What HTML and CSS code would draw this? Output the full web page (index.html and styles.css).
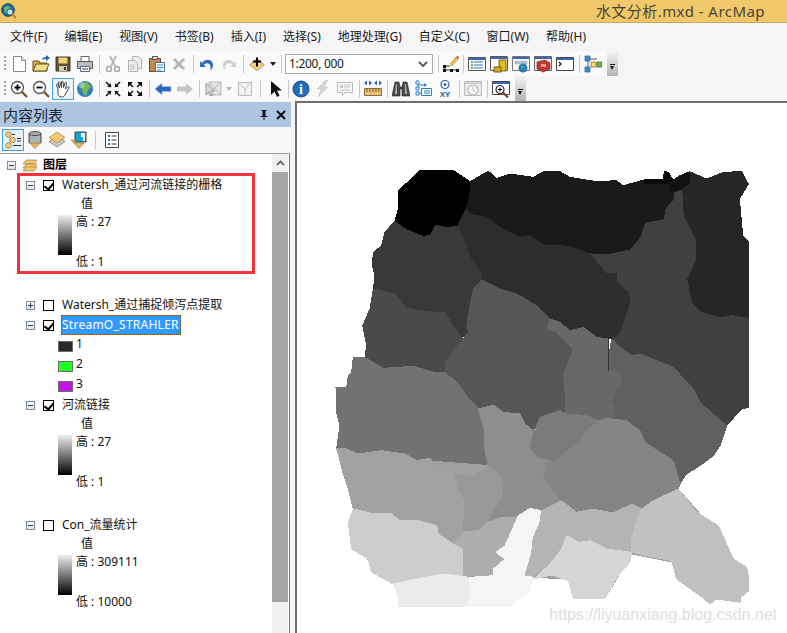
FILE: index.html
```html
<!DOCTYPE html>
<html lang="zh">
<head>
<meta charset="utf-8">
<title>水文分析.mxd - ArcMap</title>
<link rel="stylesheet" href="styles.css">
</head>
<body>
<div class="app">
  <header class="titlebar">
    <svg class="appicon" viewBox="0 0 16 16" width="16" height="16"><circle cx="7" cy="7" r="6.3" fill="#1d6f9e" stroke="#0d3f63"/><path d="M3 5l3-2 3 1 1 3-3 1-1 3-2-2z" fill="#6fbf6a"/><circle cx="9" cy="9" r="3.2" fill="#bfe6f2" stroke="#184b66"/><path d="M11 11l4 4" stroke="#c9802a" stroke-width="2"/></svg>
    <div class="title">水文分析.mxd - ArcMap</div>
  </header>

  <nav class="menubar">
    <span>文件(F)</span><span>编辑(E)</span><span>视图(V)</span><span>书签(B)</span><span>插入(I)</span><span>选择(S)</span><span>地理处理(G)</span><span>自定义(C)</span><span>窗口(W)</span><span>帮助(H)</span>
  </nav>

  <div class="toolrow">
    <div class="toolbar bar-a">
      <i class="grip"></i>
      <b class="btn"><svg viewBox="0 0 18 18"><path d="M3.5 1.5h8l4 4v11h-12z" fill="#fff" stroke="#7d8794"/><path d="M11.5 1.5v4h4" fill="#e8ecf0" stroke="#7d8794"/></svg></b>
      <b class="btn"><svg viewBox="0 0 18 18"><path d="M1 6h6l1 2h7v8H1z" fill="#d9b04a" stroke="#6a5216"/><path d="M1 16l3-7h13l-3 7z" fill="#f5dc8c" stroke="#6a5216"/><path d="M10 5c0-2 2-3 4-3V0l4 3-4 3V4c-2 0-3 0-4 1z" fill="#2a66b4"/></svg></b>
      <b class="btn"><svg viewBox="0 0 18 18"><path d="M2 2h14v14H2z" fill="#5f5330" stroke="#3f3820"/><path d="M4.500 2.500h9v6h-9z" fill="#f0cf76"/><path d="M5 11h8v5H5z" fill="#cfc8b0"/><path d="M10 12h2v3h-2z" fill="#3f3820"/></svg></b>
      <b class="btn"><svg viewBox="0 0 18 18"><path d="M5 1.500h8v5H5z" fill="#fff" stroke="#666"/><path d="M1.500 6.500h15v7h-15z" fill="#b9bcc0" stroke="#55585c"/><path d="M4.500 11.500h9v5h-9z" fill="#fff" stroke="#666"/><path d="M6 14h6" stroke="#3a80c8" stroke-width="1.500"/></svg></b>
      <i class="sep"></i>
      <b class="btn"><svg viewBox="0 0 18 18"><path d="M6 1l5 10M12 1L7 11" stroke="#b4b7ba" stroke-width="1.800" fill="none"/><circle cx="5" cy="14" r="2.500" fill="none" stroke="#a8abae" stroke-width="1.500"/><circle cx="13" cy="14" r="2.500" fill="none" stroke="#a8abae" stroke-width="1.500"/></svg></b>
      <b class="btn"><svg viewBox="0 0 18 18"><path d="M6.500 1.500h6l3 3v9h-9z" fill="#eee" stroke="#b0b2b4"/><path d="M2.500 5.500h6l3 3v8h-9z" fill="#f0f0f0" stroke="#adafb1"/><path d="M4 10h5M4 12h5M4 14h5" stroke="#bbb"/></svg></b>
      <b class="btn"><svg viewBox="0 0 18 18"><path d="M1.500 3.500h11v13h-11z" fill="#c38a4d" stroke="#6e4522"/><path d="M4.500 1.500h5v3h-5z" fill="#ddd" stroke="#555"/><path d="M7.500 7.500h9v9h-9z" fill="#fff" stroke="#4a6d96"/><path d="M9 10h6M9 12.500h6M9 15h4" stroke="#2d80c6"/></svg></b>
      <b class="btn"><svg viewBox="0 0 18 18"><path d="M4 4l10 10M14 4L4 14" stroke="#b5b7b9" stroke-width="3"/></svg></b>
      <i class="sep"></i>
      <b class="btn"><svg viewBox="0 0 18 18"><path d="M4 8c3-5 10-4 11 1 .5 3-1 5-3 6 1-3 1-5-1-6-2-1.500-4-.5-5 1l2 2H2V6z" fill="#2f6db5"/></svg></b>
      <b class="btn"><svg viewBox="0 0 18 18"><path d="M14 8C11 3 4 4 3 9c-.5 3 1 5 3 6-1-3-1-5 1-6 2-1.500 4-.5 5 1l-2 2h6V6z" fill="#cfd1d3"/></svg></b>
      <i class="sep"></i>
      <b class="btn"><svg viewBox="0 0 22 18"><path d="M11 3l9 7-9 7-9-7z" fill="#f3cf85" stroke="#a88347"/><path d="M11 1v11M6 6h10" stroke="#000" stroke-width="2.500"/></svg></b>
      <b class="drop"></b>
      <i class="sep"></i>
      <div class="combo"><span>1:200, 000</span><svg viewBox="0 0 10 6" width="10" height="6"><path d="M1 1l4 4 4-4" fill="none" stroke="#555" stroke-width="1.800"/></svg></div>
      <i class="sep sep-m"></i>
      <b class="btn btn-19"><svg viewBox="0 0 18 18"><path d="M8 9l6-7 2 2-6 7z" fill="#f2c25a" stroke="#a97b2a" stroke-width=".6"/><path d="M14 2l2 2 1-1.500L15.500 1z" fill="#d33"/><path d="M2 15h14M3 11v4M3 11l5 0" stroke="#222"/><path d="M1 10h3v3H1zM1 14h3v3H1zM8 14h3v3H8zM14 14h3v3h-3z" fill="#111"/></svg></b>
      <i class="sep"></i>
      <b class="btn"><svg viewBox="0 0 18 18"><path d="M.5 2.500h17v13H.5z" fill="#fff" stroke="#555"/><path d="M1 3h16v2H1z" fill="#3968b8"/><path d="M3 7h2M3 10h2M3 13h2" stroke="#2f9b45" stroke-width="1.500"/><path d="M6 7h9M6 10h9M6 13h9" stroke="#2d6cc0" stroke-width="1.200"/></svg></b>
      <b class="btn"><svg viewBox="0 0 18 18"><path d="M.5 1.500h17v14H.5z" fill="#fff" stroke="#555"/><path d="M1 2h16v2H1z" fill="#3968b8"/><path d="M9 5h7v11H9z" fill="#e8bd20" stroke="#7d6510"/><path d="M4 12h7v5H4z" fill="#d9b01d" stroke="#6d5c10"/></svg></b>
      <b class="btn"><svg viewBox="0 0 18 18"><path d="M.5 1.500h17v14H.5z" fill="#fff" stroke="#777"/><path d="M1 2h16v2H1z" fill="#3968b8"/><path d="M3 6h12v3H3z" fill="#b8c6d8" stroke="#8fa0b4" stroke-width=".5"/><circle cx="11" cy="13" r="4.500" fill="#2c79c2"/><path d="M9 10l3 1-1 3-2-1z" fill="#54b04a"/></svg></b>
      <b class="btn"><svg viewBox="0 0 18 18"><path d="M.5 1.500h17v14H.5z" fill="#eee" stroke="#666"/><path d="M1 2h16v2H1z" fill="#3968b8"/><path d="M3 7l8-2 5 3v6l-7 3-6-3z" fill="#bf3a35" stroke="#7b1e1a" stroke-width=".6"/><path d="M7 9h5v3H7z" fill="#e89a94"/></svg></b>
      <b class="btn"><svg viewBox="0 0 18 18"><path d="M.5 2.500h17v13H.5z" fill="#fff" stroke="#444"/><path d="M1 3h16v2H1z" fill="#3968b8"/><path d="M3 7l2 2-2 2" fill="none" stroke="#111" stroke-width="1.200"/></svg></b>
      <i class="sep"></i>
      <b class="btn"><svg viewBox="0 0 18 18"><path d="M4 4h9M4 4v10h2M13 10h0" stroke="#555" fill="none"/><path d="M1 1h5v5H1zM1 12h5v5H1z" fill="#3a8fd8" stroke="#1f5f9c" stroke-width=".7"/><path d="M7 7h5v5H7z" fill="#f0d98a" stroke="#8a6f20" stroke-width=".8"/><path d="M13 7h5v5h-5z" fill="#6cb84b" stroke="#356f20" stroke-width=".8"/></svg></b>
    </div>
    <div class="handle"></div>
  </div>

  <div class="toolrow">
    <div class="toolbar bar-b">
      <i class="grip"></i>
      <b class="btn"><svg viewBox="0 0 18 18"><circle cx="7.500" cy="7.500" r="6" fill="#fff" stroke="#555" stroke-width="1.300"/><path d="M4.500 7.500h6M7.500 4.500v6" stroke="#000" stroke-width="1.800"/><path d="M12 12l5 5" stroke="#7a4a2a" stroke-width="2.300"/></svg></b>
      <b class="btn"><svg viewBox="0 0 18 18"><circle cx="7.500" cy="7.500" r="6" fill="#fff" stroke="#555" stroke-width="1.300"/><path d="M4.500 7.500h6" stroke="#000" stroke-width="1.800"/><path d="M12 12l5 5" stroke="#7a4a2a" stroke-width="2.300"/></svg></b>
      <b class="btn btn-on"><svg viewBox="0 0 18 18"><path d="M4 9L2.500 5c-.4-1 1-1.500 1.500-.5L5.500 8 4.500 3c-.2-1.200 1.300-1.400 1.600-.3L7.500 7.500 7.500 2c0-1.200 1.500-1.200 1.600 0L9.500 7.500 11 3c.3-1 1.700-.7 1.500.4L11.500 9l2-2c.8-.8 2 .2 1.300 1.100L11.500 14c-1 2-2 3-4 3-2.500 0-3.500-2-3.500-4z" fill="#fff" stroke="#333" stroke-width=".9"/></svg></b>
      <b class="btn"><svg viewBox="0 0 18 18"><circle cx="9" cy="9" r="8" fill="#2f7fc4"/><path d="M5 3l6-1 4 5-3 3-2 6-3-2-1-5-3-2z" fill="#7cb84a"/><circle cx="6" cy="5" r="3" fill="#b6d9f0" opacity=".5"/></svg></b>
      <i class="sep"></i>
      <b class="btn"><svg viewBox="0 0 18 18"><path d="M2 2l5 5M16 2l-5 5M2 16l5-5M16 16l-5-5" stroke="#111" stroke-width="1.500"/><path d="M3 7h4V3zM15 7h-4V3zM3 11h4v4zM15 11h-4v4z" fill="#111"/></svg></b>
      <b class="btn"><svg viewBox="0 0 18 18"><path d="M4 4l3 3M14 4l-3 3M4 14l3-3M14 14l-3-3" stroke="#111" stroke-width="1.500"/><path d="M2 2h5L2 7zM16 2h-5l5 5zM2 16h5l-5-5zM16 16h-5l5-5z" fill="#111"/></svg></b>
      <i class="sep"></i>
      <b class="btn"><svg viewBox="0 0 18 18"><path d="M1 9l7-6v3.500h9v5H8V15z" fill="#2a64c0" stroke="#a4c0e6" stroke-width=".7"/></svg></b>
      <b class="btn"><svg viewBox="0 0 18 18"><path d="M17 9l-7-6v3.500H1v5h9V15z" fill="#c2c4c6"/></svg></b>
      <i class="sep"></i>
      <b class="btn"><svg viewBox="0 0 18 18"><path d="M5 2h12v13H5z" fill="#e6e6e6" stroke="#b6b6b6"/><path d="M5 2l12 13M17 2L10 9" stroke="#bbb"/><path d="M2 3v12l3-3 2 4 2-1-2-4h4z" fill="#d8d8d8" stroke="#9a9a9a"/></svg></b>
      <b class="drop drop-off"></b>
      <b class="btn"><svg viewBox="0 0 18 18"><path d="M2.500 2.500h13v13h-13z" fill="#f2f2f2" stroke="#bbb"/><path d="M3 3l6 6 6-6M9 9v6" stroke="#c4c4c4" fill="none"/></svg></b>
      <i class="sep sep-8"></i>
      <b class="btn"><svg viewBox="0 0 18 18"><path d="M5 1v14l3.500-3.500L11 17l2.500-1.500L11 10.500h5z" fill="#111"/></svg></b>
      <i class="sep sep-4"></i>
      <b class="btn"><svg viewBox="0 0 18 18"><circle cx="9" cy="9" r="8" fill="#1f6dc2" stroke="#154f90"/><text x="9" y="14" class="info">i</text></svg></b>
      <b class="btn"><svg viewBox="0 0 18 18"><path d="M12 0L3 9h4l-3 8 10-10h-4l4-7z" fill="#d4d6d8" stroke="#bcbec0" stroke-width=".5"/></svg></b>
      <b class="btn"><svg viewBox="0 0 18 18"><path d="M1.500 2.500h15v10h-7l-3 3v-3h-5z" fill="#f7f7f7" stroke="#bbb"/><path d="M4 5h3v3H4z" fill="#ccc"/><path d="M8 5h6M8 7h6M4 10h10" stroke="#c4c4c4"/></svg></b>
      <i class="sep"></i>
      <b class="btn"><svg viewBox="0 0 18 18"><path d="M0 3l3-2.500v5zM8 3L5 .5v5zM10 3l3-2.500v5zM18 3l-3-2.500v5z" fill="#2a66b4"/><path d="M.5 8.500h17v7H.5z" fill="#e9c47a" stroke="#8a6a30"/><path d="M3 9v3M6 9v3M9 9v3M12 9v3M15 9v3" stroke="#6c5020"/></svg></b>
      <i class="sep"></i>
      <b class="btn"><svg viewBox="0 0 18 18"><path d="M3 2h4l1 5h2l1-5h4l3 14H10V9H8v7H0z" fill="#4a4a4a" stroke="#222" stroke-width=".6"/><path d="M4 4h1v10H3zM13 4h1l1 10h-2z" fill="#b0b0b0"/></svg></b>
      <b class="btn"><svg viewBox="0 0 18 18"><path d="M4 3v6M4 5h6M7 13h-3" stroke="#2a7fc8" fill="none"/><path d="M2 1h3v3H2zM2 7h3v3H2zM2 12h3v3H2z" fill="#fff" stroke="#2a7fc8"/><path d="M10 3l3 2-3 2z" fill="#2a7fc8"/><path d="M7.500 8.500h10v7h-10z" fill="#fff" stroke="#2a7fc8"/><path d="M10 11h6M10 13h6" stroke="#2a7fc8"/></svg></b>
      <b class="btn"><svg viewBox="0 0 18 18"><circle cx="9" cy="4.500" r="4" fill="#fff" stroke="#2a66b4" stroke-width="1.200"/><circle cx="9" cy="4.500" r="1.500" fill="#2a66b4"/><text x="9" y="16.500" class="xy">XY</text></svg></b>
      <i class="sep"></i>
      <b class="btn"><svg viewBox="0 0 18 18"><path d="M.5 1.500h17v14H.5z" fill="#eaeaea" stroke="#bbb"/><path d="M1 2h16v2H1z" fill="#cfcfcf"/><circle cx="9" cy="10" r="5" fill="#f5f5f5" stroke="#bbb" stroke-width="1.200"/><path d="M9 7v3l2 1.500" stroke="#bbb" fill="none"/></svg></b>
      <i class="sep"></i>
      <b class="btn"><svg viewBox="0 0 18 18"><path d="M.5 1.500h17v13H.5z" fill="#fff" stroke="#444"/><path d="M1 2h16v2H1z" fill="#3968b8"/><circle cx="8" cy="9.500" r="4" fill="#fff" stroke="#222" stroke-width="1.200"/><path d="M6 9.500h4M8 7.500v4" stroke="#000"/><path d="M11 12.500l5 5" stroke="#7a3f28" stroke-width="2"/></svg></b>
    </div>
    <div class="handle"></div>
  </div>

  <main class="workspace">
    <aside class="toc">
      <div class="toc-title">
        <h2>内容列表</h2>
        <svg viewBox="0 0 10 12" width="10" height="12"><path d="M2.500 1h5v1h-1v5h2v1H5.500v3h-1V8H1.500V7h2V2h-1z" fill="#111"/></svg>
        <svg viewBox="0 0 10 10" width="10" height="10"><path d="M1 1l8 8M9 1L1 9" stroke="#111" stroke-width="2"/></svg>
      </div>
      <div class="toc-tools">
        <b class="tbtn tbtn-on"><svg viewBox="0 0 18 18"><circle cx="4.500" cy="3.500" r="2.800" fill="#f0cf86" stroke="#a98a46"/><circle cx="8.500" cy="9" r="2.800" fill="#f0cf86" stroke="#a98a46"/><circle cx="4.500" cy="14.500" r="2.800" fill="#f0cf86" stroke="#a98a46"/><path d="M13 7.500h4M13 10h4M8 3.500h3M9 14.500h8" stroke="#333"/></svg></b>
        <b class="tbtn"><svg viewBox="0 0 18 18"><path d="M3 2.500c0-2.500 12-2.500 12 0v9c0 2-12 2-12 0z" fill="#aab1b8" stroke="#444"/><path d="M3 3c2 2 10 2 12 0" fill="none" stroke="#444"/><path d="M4 12h10l-5 5.500z" fill="#e6b65a" stroke="#a5803a" stroke-width=".7"/></svg></b>
        <b class="tbtn"><svg viewBox="0 0 18 18"><path d="M9 5l8 5.500-8 5.500-8-5.500z" fill="#c9c9c9" stroke="#777" stroke-width=".7"/><path d="M9 1l8 5.500-8 5.500-8-5.500z" fill="#f2c877" stroke="#a5803a" stroke-width=".7"/></svg></b>
        <b class="tbtn"><svg viewBox="0 0 18 18"><path d="M5 1h11v10H5z" fill="#14a3d8" stroke="#444"/><path d="M11 2h4v8h-2V6h-2z" fill="#fff"/><path d="M1 9h4v3h9l-5 5.500z" fill="#e6b65a" stroke="#a5803a" stroke-width=".7"/></svg></b>
        <i class="tsep"></i>
        <b class="tbtn"><svg viewBox="0 0 18 18"><path d="M2.500 1.500h13v15h-13z" fill="#fff" stroke="#445"/><path d="M5 5h2M5 9h2M5 13h2" stroke="#2b6bb0" stroke-width="1.800"/><path d="M8.500 5h5M8.500 9h5M8.500 13h5" stroke="#333"/></svg></b>
      </div>
      <div class="tree-frame">
        <div class="tree">
          <div class="row root">
            <i class="exp minus"></i>
            <svg class="stack" viewBox="0 0 16 13" width="16" height="13"><path d="M4 1h11l-3 4H1z" fill="#f2c877" stroke="#a5803a" stroke-width=".7"/><path d="M4 5h11l-3 4H1z" fill="#f2c877" stroke="#a5803a" stroke-width=".7"/><path d="M4 8h11l-3 4H1z" fill="#f2c877" stroke="#a5803a" stroke-width=".7"/></svg>
            <span class="root-label">图层</span>
          </div>

          <div class="row layer"><i class="exp minus"></i><i class="chk on"></i><span class="name">Watersh_通过河流链接的栅格</span></div>
          <div class="val">值</div>
          <div class="ramp"><i class="grad"></i><span>高 : 27</span><span>低 : 1</span></div>

          <div class="row layer"><i class="exp plus"></i><i class="chk"></i><span class="name">Watersh_通过捕捉倾泻点提取</span></div>
          <div class="row layer"><i class="exp minus"></i><i class="chk on"></i><span class="name selected">StreamO_STRAHLER</span></div>
          <div class="row cls"><i class="sw sw1"></i><span>1</span></div>
          <div class="row cls"><i class="sw sw2"></i><span>2</span></div>
          <div class="row cls"><i class="sw sw3"></i><span>3</span></div>

          <div class="row layer"><i class="exp minus"></i><i class="chk on"></i><span class="name">河流链接</span></div>
          <div class="val">值</div>
          <div class="ramp"><i class="grad"></i><span>高 : 27</span><span>低 : 1</span></div>

          <div class="row layer"><i class="exp minus"></i><i class="chk"></i><span class="name">Con_流量统计</span></div>
          <div class="val">值</div>
          <div class="ramp"><i class="grad"></i><span>高 : 309111</span><span>低 : 10000</span></div>

          <div class="annotation"></div>
        </div>
        <div class="scrollbar">
          <div class="sb-up"><svg viewBox="0 0 9 6" width="9" height="6"><path d="M1 5l3.500-3.500L8 5" fill="none" stroke="#555" stroke-width="1.600"/></svg></div>
          <div class="sb-thumb"></div>
        </div>
      </div>
    </aside>

    <section class="map">
      <svg class="mapsvg" viewBox="297 104 490 529" width="490" height="529">
        <g transform="translate(330 160) scale(.33333)">
          <polygon class="c-c" points="1078,38 1130,60 1180,40 1235,38 1255,75 1228,120 1238,230 1257,250 1257,478 1205,470 1170,476 1115,460 1085,430 1070,360 1098,300 1095,240 1060,170 1055,90 1080,70"/>
          <polygon class="c-d" points="1045,92 1055,90 1060,170 1095,240 1098,300 1070,360 1085,430 1115,460 1170,476 1205,470 1257,478 1257,745 1235,750 1190,800 1110,730 1090,690 1030,625 930,585 905,590 865,560 845,540 870,520 900,430 895,400 860,370 860,345 830,345 780,285 830,285 900,270 930,235 945,190 1000,180 1005,150 1030,120 1030,100"/>
          <polygon class="c-b" points="420,68 475,36 500,58 540,45 610,55 640,38 690,38 720,55 800,68 860,65 880,80 945,62 1000,62 1003,36 1015,40 1030,65 1050,50 1078,38 1080,70 1055,90 1030,100 1030,120 1005,150 1000,180 945,190 930,235 900,270 830,285 760,280 720,262 640,258 600,230 570,235 510,205 470,175 420,165 405,150"/>
          <polygon class="c-x" points="945,62 1000,62 1003,36 1015,40 1030,65 1020,75 945,75"/>
          <polygon class="c-y" points="1020,70 1050,50 1078,38 1080,70 1055,90 1040,92 1020,100"/>
          <polygon class="c-e" points="405,150 420,165 470,175 510,205 570,235 600,230 640,258 720,262 780,285 830,345 860,345 860,370 895,400 900,430 870,520 845,540 800,535 760,505 720,515 690,490 660,480 620,440 560,405 510,390 455,362 440,320 420,295 400,240 380,200"/>
          <polygon class="c-f" points="195,185 232,210 280,230 300,225 315,195 345,202 380,200 400,240 420,295 450,340 455,362 430,390 420,440 410,500 415,520 400,535 375,510 345,462 290,458 230,448 195,405 130,390 135,350 127,320 130,280 155,260 165,220"/>
          <polygon class="c-a" points="268,36 372,36 420,68 416,110 405,150 380,200 345,202 315,195 300,225 280,230 232,210 195,185 205,150 205,95"/>
          <polygon class="c-g" points="130,390 195,405 230,448 290,458 345,462 375,510 400,540 375,570 348,610 348,642 320,642 250,622 160,628 105,595 110,560 98,500 120,450"/>
          <polygon class="c-h" points="455,362 510,390 560,405 620,440 660,480 650,510 680,520 730,570 700,650 708,720 708,765 690,755 630,775 610,815 585,795 570,765 540,760 520,760 490,738 445,750 435,735 415,720 390,680 348,642 348,610 375,570 400,540 415,520 410,500 420,440 430,390"/>
          <polygon class="c-j" points="845,540 865,560 905,590 930,585 1030,625 1090,690 1110,730 1190,800 1170,860 1150,890 1110,920 1070,945 1050,975 1030,905 945,850 930,815 890,785 855,780 855,750 845,725 860,690 875,670 865,635 835,635 835,600"/>
          <polygon class="c-i" points="660,480 690,490 720,515 760,505 800,535 835,540 835,635 865,635 875,670 860,690 845,725 855,750 855,780 805,785 770,770 708,765 708,720 700,650 730,570 680,520 650,510"/>
          <polygon class="c-k" points="70,595 105,595 160,628 250,622 320,642 348,642 390,680 415,720 435,735 445,750 465,820 465,870 475,920 420,952 375,945 340,945 300,898 260,905 225,885 155,875 85,885 50,870 20,868 30,800 20,760 18,685 50,685 55,650 65,640"/>
          <rect class="c-line" x="834" y="540" width="4" height="95"/>
        </g>
        <g transform="translate(330 390) scale(.33333)">
          <polygon class="c-base" points="90,200 480,230 1040,280 1045,300 1150,420 1200,520 1240,600 1140,630 1030,520 905,495 830,620 730,620 715,570 610,565 600,605 420,645 210,645 195,580 130,540 90,470"/>
          <polygon class="c-l" points="445,60 490,48 520,70 570,75 585,105 610,125 600,175 625,205 675,215 640,225 650,240 640,265 695,335 635,365 565,380 515,385 470,400 500,350 515,320 520,280 500,245 475,235 465,180 465,130"/>
          <polygon class="c-m" points="630,85 690,65 708,75 770,80 805,95 765,130 750,160 700,195 675,215 625,205 600,175 612,130"/>
          <polygon class="c-n" points="805,95 830,88 890,95 930,125 945,160 1030,215 1050,285 1045,300 970,335 935,360 905,345 850,372 790,360 740,370 695,335 640,265 650,240 640,225 675,215 700,195 750,160 765,130"/>
          <polygon class="c-o" points="20,178 50,180 85,195 155,185 225,195 260,215 300,208 340,255 375,255 385,300 405,335 400,425 370,465 325,435 320,410 265,395 210,395 185,375 120,372 70,360 55,300 40,255"/>
          <polygon class="c-p" points="375,255 420,262 475,235 500,245 520,280 515,320 500,350 470,400 445,425 400,428 405,335 385,300"/>
          <polygon class="c-q" points="400,428 445,425 470,400 515,385 565,385 525,470 497,490 525,510 490,540 490,560 397,560 397,480 370,465"/>
          <polygon class="c-r" points="70,360 120,372 185,375 210,395 265,395 320,410 325,435 370,465 397,480 397,560 340,555 260,570 190,585 125,550 115,510 65,480 55,400"/>
          <polygon class="c-s" points="190,585 260,570 340,555 420,565 420,630 410,653 207,653 205,620"/>
          <polygon class="c-t" points="565,380 600,358 632,365 630,400 610,445 605,490 585,560 610,565 600,610 560,635 545,653 410,653 420,630 420,565 490,560 490,540 525,510 497,490 525,470"/>
          <polygon class="c-u" points="635,365 695,335 740,370 790,360 850,372 905,345 935,360 915,410 905,450 905,490 830,480 780,455 745,460 710,440 695,480 660,525 610,560 585,560 605,490 610,445 630,400"/>
          <polygon class="c-v" points="710,440 745,460 780,455 830,480 905,490 900,520 860,565 825,628 730,628 715,575 665,558 610,570 660,525 695,480"/>
          <polygon class="c-w" points="1045,300 1100,370 1165,410 1210,510 1250,535 1257,570 1257,605 1232,625 1230,640 1160,630 1140,645 1110,620 1040,570 1025,515 970,505 905,490 905,450 915,410 935,360 970,335"/>
        </g>
      </svg>
      <div class="watermark">https://liyuanxiang.blog.csdn.net</div>
    </section>
  </main>
</div>
</body>
</html>
```
FILE: styles.css
```css
* { box-sizing: border-box; margin: 0; padding: 0; }
html, body { height: 100%; overflow: hidden; }
body {
  font-family: "Noto Sans", "Noto Sans CJK SC", sans-serif;
  font-size: 12px;
  color: #1a1a1a;
  background: #f5f5f5;
}
.app { width: 787px; height: 633px; display: flex; flex-direction: column; overflow: hidden; }

/* title bar */
.titlebar {
  height: 23px;
  flex: none;
  display: flex;
  align-items: center;
  justify-content: space-between;
  padding: 0 22px 0 1px;
  background: #f0c869;
  border-bottom: 1px solid #c8a860;
}
.appicon { display: block; }
.title { font-size: 15px; line-height: 22px; color: #4b4335; letter-spacing: .45px; }

/* menu */
.menubar {
  height: 28px;
  flex: none;
  display: flex;
  align-items: center;
  gap: 17px;
  padding-left: 10px;
  background: #f5f5f5;
  line-height: 18px;
  white-space: nowrap;
}

/* tool bars */
.toolrow { height: 25px; flex: none; display: flex; align-items: stretch; }
.toolbar { display: flex; align-items: center; background: #fafafa; position: relative; padding-left: 8px; height: 25px; }
.bar-a { width: 607px; }
.bar-b { width: 515px; }
.grip {
  position: absolute; left: 4px; top: 5px; width: 2px; height: 15px;
  background-image: repeating-linear-gradient(#a0a0a0 0 2px, transparent 2px 4px);
}
.btn { width: 22px; height: 22px; flex: none; display: flex; align-items: center; justify-content: center; }
.btn svg { width: 18px; height: 18px; display: block; }
.btn-19 { width: 19px; }
.btn-on { background: #eaf5fd; border: 1px solid #3f9ff0; }
.drop { width: 10px; height: 22px; flex: none; position: relative; }
.drop::after {
  content: ""; position: absolute; left: 2px; top: 9px;
  border-left: 3.500px solid transparent; border-right: 3.500px solid transparent; border-top: 4px solid #222;
}
.drop-off::after { border-top-color: #b5b5b5; }
.sep { width: 6px; height: 18px; flex: none; position: relative; }
.sep::after { content: ""; position: absolute; left: 3px; top: 0; width: 1px; height: 18px; background: #c8c8c8; }
.sep-8 { width: 8px; }
.sep-8::after { left: 4px; }
.sep-4 { width: 4px; }
.sep-4::after { left: 2px; }
.sep-m { margin-left: 2px; }
.combo {
  width: 148px; height: 20px; margin-left: 1px; flex: none;
  display: flex; align-items: center; justify-content: space-between;
  padding: 0 4px 0 3px;
  background: #fff; border: 1px solid #ababab;
  font-size: 12px; letter-spacing: -.3px;
}
.handle {
  width: 11px;
  background: linear-gradient(#f4f4f4, #b4b4b4);
  position: relative;
}
.handle::before {
  content: ""; position: absolute; left: 3px; top: 13px; width: 5px; height: 1px; background: #111;
}
.handle::after {
  content: ""; position: absolute; left: 3px; top: 15px;
  border-left: 2.500px solid transparent; border-right: 2.500px solid transparent; border-top: 4px solid #111;
}
.info { font: bold 14px "Liberation Serif", serif; fill: #fff; text-anchor: middle; }
.xy { font: bold 8px "Liberation Sans", sans-serif; fill: #1f5aa8; text-anchor: middle; }

/* workspace */
.workspace { flex: 1; display: flex; min-height: 0; }
.toc { width: 295px; flex: none; display: flex; flex-direction: column; background: #f5f5f5; padding-top: 1px; }
.toc-title {
  width: 291px; height: 25px; flex: none;
  display: flex; align-items: center; gap: 7px;
  padding: 0 5px 0 3px;
  background: #aec6e2;
}
.toc-title h2 { flex: 1; font-size: 15px; font-weight: 400; color: #1b2636; line-height: 24px; }
.toc-tools { height: 26px; flex: none; display: flex; align-items: center; padding-left: 2px; background: #f9f9f9; width: 291px; }
.tbtn { width: 22px; height: 22px; flex: none; display: flex; align-items: center; justify-content: center; }
.tbtn svg { width: 18px; height: 18px; display: block; }
.tbtn-on { background: #e6f2fb; border: 1px solid #3f9ff0; }
.tsep { width: 1px; height: 18px; margin: 0 5px; background: #c8c8c8; flex: none; }

.tree-frame {
  width: 290px; flex: 1; min-height: 0; display: flex;
  background: #fff;
  border-top: 1px solid #9a9a9a;
  border-right: 1px solid #7e7e7e;
}
.tree { flex: 1; position: relative; padding-top: 1px; color: #111; white-space: nowrap; }
.row { height: 20px; display: flex; align-items: center; }
.root { padding-left: 7px; }
.stack { margin-left: 6px; }
.root-label { margin-left: 5px; font-weight: 700; line-height: 18px; color: #000; }
.layer { padding-left: 26px; }
.exp {
  width: 9px; height: 9px; flex: none; position: relative;
  border: 1px solid #7f8c99;
  background: linear-gradient(#fff, #dfe3e7);
}
.minus::before, .plus::before {
  content: ""; position: absolute; left: 1px; top: 3px; width: 5px; height: 1px; background: #2b3a55;
}
.plus::after {
  content: ""; position: absolute; left: 3px; top: 1px; width: 1px; height: 5px; background: #2b3a55;
}
.chk {
  width: 11px; height: 11px; flex: none; margin-left: 8px; position: relative;
  border: 1px solid #000; background: #fff;
}
.on::after {
  content: ""; position: absolute; left: 2px; top: 0; width: 4px; height: 7px;
  border: solid #000; border-width: 0 2px 2px 0; transform: rotate(40deg);
}
.name { margin-left: 7px; padding: 0 1px; line-height: 20px; }
.selected {
  background: #3399ff; color: #fff;
  outline: 1px dotted #7a4b00; outline-offset: -1px;
  width: 120px;
  letter-spacing: .25px;
}
.val { height: 18px; line-height: 18px; padding-left: 81px; }
.ramp {
  height: 58px; margin-bottom: 24px; position: relative;
  padding-left: 76px;
  display: flex; flex-direction: column; justify-content: space-between;
}
.ramp span { height: 18px; line-height: 18px; }
.grad {
  position: absolute; left: 58px; top: 2px; width: 14px; height: 40px;
  background: linear-gradient(#f0f0f0, #000);
}
.cls { padding-left: 58px; gap: 3px; }
.cls span { line-height: 16px; margin-top: -2px; }
.sw { width: 15px; height: 11px; flex: none; border: 1px solid #6b6b6b; margin-top: 2px; }
.sw1 { background: #2b2b2b; }
.sw2 { background: #1eff1e; }
.sw3 { background: #c215e6; }
.annotation {
  position: absolute; left: 17px; top: 19px; width: 238px; height: 101px;
  border: 3px solid #f5333f;
}
.scrollbar { width: 16px; flex: none; margin-right: 1px; background: #f0f0f0; display: flex; flex-direction: column; }
.sb-up { height: 18px; flex: none; display: flex; align-items: center; justify-content: center; }
.sb-thumb { height: 430px; background: #a6a6a6; }

/* map */
.map {
  flex: 1; position: relative; background: #fff; overflow: hidden;
  border-top: 2px solid #6e6e6e;
  border-left: 2px solid #6e6e6e;
}
.mapsvg { display: block; shape-rendering: crispEdges; }
.mapsvg polygon { stroke-width: 3; }
.c-base { fill: #a0a0a0; stroke: #a0a0a0; }
.c-a { fill: #000; stroke: #000; }
.c-b { fill: #1a1a1a; stroke: #1a1a1a; }
.c-c { fill: #262626; stroke: #262626; }
.c-d { fill: #404040; stroke: #404040; }
.c-e { fill: #2d2d2d; stroke: #2d2d2d; }
.c-f { fill: #393939; stroke: #393939; }
.c-g { fill: #4a4a4a; stroke: #4a4a4a; }
.c-h { fill: #565656; stroke: #565656; }
.c-i { fill: #686868; stroke: #686868; }
.c-j { fill: #606060; stroke: #606060; }
.c-k { fill: #727272; stroke: #727272; }
.c-l { fill: #8e8e8e; stroke: #8e8e8e; }
.c-m { fill: #7b7b7b; stroke: #7b7b7b; }
.c-n { fill: #858585; stroke: #858585; }
.c-o { fill: #a2a2a2; stroke: #a2a2a2; }
.c-p { fill: #989898; stroke: #989898; }
.c-q { fill: #adadad; stroke: #adadad; }
.c-r { fill: #cdcdcd; stroke: #cdcdcd; }
.c-s { fill: #ebebeb; stroke: #ebebeb; }
.c-t { fill: #f5f5f5; stroke: #f5f5f5; }
.c-u { fill: #b4b4b4; stroke: #b4b4b4; }
.c-v { fill: #d6d6d6; stroke: #d6d6d6; }
.c-w { fill: #c1c1c1; stroke: #c1c1c1; }
.c-x { fill: #0a0a0a; stroke: #0a0a0a; }
.c-y { fill: #111; stroke: #111; }
.c-line { fill: #333; }
.watermark {
  position: absolute; right: 10px; bottom: 9px;
  font: 16px/18px "Liberation Sans", sans-serif;
  color: #dedede;
  white-space: nowrap;
}
```
